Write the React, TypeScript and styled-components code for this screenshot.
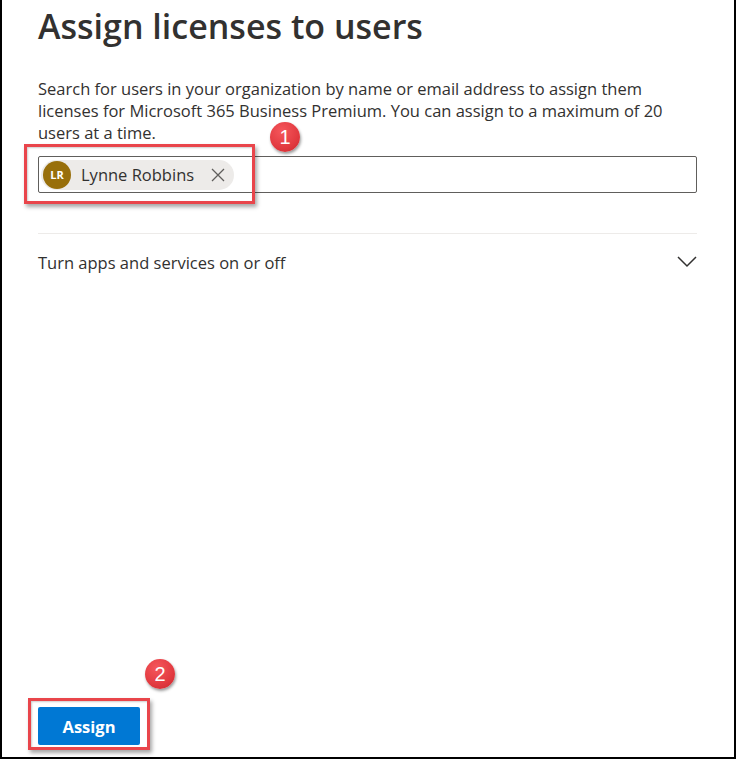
import React from "react";
import styled, { createGlobalStyle } from "styled-components";

const Global = createGlobalStyle`
  html, body { margin: 0; padding: 0; background: #ffffff; }
  body { font-family: "Open Sans", "Noto Sans", sans-serif; color: #323130; }
`;

const Frame = styled.div`
  position: relative;
  box-sizing: border-box;
  width: 736px;
  height: 759px;
  border-left: 2px solid #000;
  border-right: 2px solid #000;
  border-bottom: 2px solid #000;
  padding: 0 37px 12px 36px;
  display: flex;
  flex-direction: column;
  background: #fff;
`;

const Title = styled.h1`
  margin: 0;
  padding-top: 3px;
  font-family: "Open Sans", "Noto Sans", sans-serif;
  font-weight: 600;
  font-size: 34px;
  line-height: 46px;
  letter-spacing: 0;
  color: #323130;
`;

const Description = styled.p`
  margin: 29px 0 0;
  max-width: 640px;
  font-size: 16.5px;
  line-height: 22px;
  color: #323130;
`;

const PickerBox = styled.div`
  margin-top: 12px;
  box-sizing: border-box;
  height: 37px;
  border: 1px solid #605e5c;
  border-radius: 2px;
  display: flex;
  align-items: center;
  padding: 0 2px;
`;

const Chip = styled.div`
  display: flex;
  align-items: center;
  height: 30px;
  border-radius: 15px;
  background: #edebe9;
  padding: 0 6px 0 2px;
  gap: 10px;
`;

const Avatar = styled.div`
  width: 28px;
  height: 28px;
  border-radius: 50%;
  background: #986f0b;
  color: #fff;
  font-size: 11px;
  font-weight: 700;
  display: flex;
  align-items: center;
  justify-content: center;
`;

const ChipName = styled.span`
  font-size: 16.5px;
  color: #323130;
`;

const ChipRemove = styled.span`
  display: flex;
  align-items: center;
  justify-content: center;
  width: 20px;
  height: 20px;
  margin-left: 4px;
`;

const Divider = styled.div`
  margin-top: 40px;
  height: 1px;
  background: #edebe9;
`;

const AccordionRow = styled.div`
  display: flex;
  align-items: center;
  justify-content: space-between;
  height: 56px;
  font-size: 16.5px;
  color: #323130;
`;

const Footer = styled.div`
  margin-top: auto;
  display: flex;
`;

const PrimaryButton = styled.button`
  box-sizing: border-box;
  width: 102px;
  height: 38px;
  border: none;
  border-radius: 2px;
  background: #0078d4;
  color: #fff;
  font-family: "Open Sans", "Noto Sans", sans-serif;
  font-size: 16.5px;
  font-weight: 700;
  cursor: pointer;
`;

const Highlight = styled.div<{ $x: number; $y: number; $w: number; $h: number }>`
  position: absolute;
  left: ${(p) => p.$x}px;
  top: ${(p) => p.$y}px;
  width: ${(p) => p.$w}px;
  height: ${(p) => p.$h}px;
  box-sizing: border-box;
  border: 3px solid #e9454b;
  box-shadow: 2px 3px 4px rgba(0, 0, 0, 0.35), inset 1px 1px 2px rgba(0, 0, 0, 0.2);
  pointer-events: none;
`;

const Badge = styled.div<{ $cx: number; $cy: number }>`
  position: absolute;
  left: ${(p) => p.$cx - 15}px;
  top: ${(p) => p.$cy - 15}px;
  width: 30px;
  height: 30px;
  border-radius: 50%;
  background: radial-gradient(circle at 40% 30%, #f5575c 0%, #e23a40 60%, #c9262c 100%);
  box-shadow: 1px 2px 3px rgba(0, 0, 0, 0.4);
  color: #fff;
  font-family: "Liberation Sans", Arial, sans-serif;
  font-size: 20px;
  display: flex;
  align-items: center;
  justify-content: center;
`;

const CloseIcon = () => (
  <svg width="14" height="14" viewBox="0 0 14 14">
    <path d="M1 1 L13 13 M13 1 L1 13" stroke="#605e5c" strokeWidth="1.3" fill="none" />
  </svg>
);

const Chevron = () => (
  <svg width="20" height="12" viewBox="0 0 20 12">
    <path d="M1 1 L10 10 L19 1" stroke="#323130" strokeWidth="1.5" fill="none" />
  </svg>
);

export default function App() {
  return (
    <>
      <Global />
      <Frame>
        <Title>Assign licenses to users</Title>
        <Description>
          Search for users in your organization by name or email address to assign them
          licenses for Microsoft 365 Business Premium. You can assign to a maximum of 20
          users at a time.
        </Description>
        <PickerBox>
          <Chip>
            <Avatar>LR</Avatar>
            <ChipName>Lynne Robbins</ChipName>
            <ChipRemove>
              <CloseIcon />
            </ChipRemove>
          </Chip>
        </PickerBox>
        <Divider />
        <AccordionRow>
          <span>Turn apps and services on or off</span>
          <Chevron />
        </AccordionRow>
        <Footer>
          <PrimaryButton>Assign</PrimaryButton>
        </Footer>
        <Highlight $x={22} $y={144} $w={231} $h={60} />
        <Badge $cx={283} $cy={137}>1</Badge>
        <Highlight $x={26} $y={698} $w={122} $h={52} />
        <Badge $cx={158} $cy={674}>2</Badge>
      </Frame>
    </>
  );
}
